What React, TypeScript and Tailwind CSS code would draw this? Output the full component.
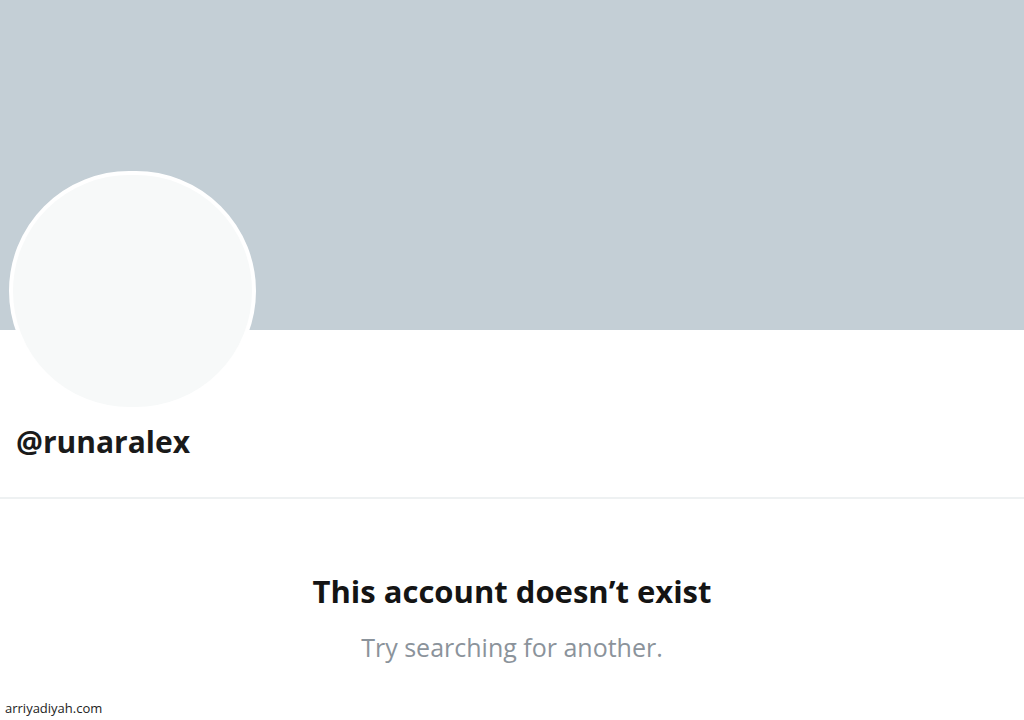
export default function App() {
  return (
    <div className="relative h-[720px] w-[1024px] overflow-hidden bg-white font-['Open_Sans',Arial,sans-serif]">
      <div className="h-[330px] bg-[#c4cfd6]" />
      <div className="px-[9px]">
        <div className="-mt-[159px] h-[240px] w-[247px] rounded-full border-[4px] border-white bg-[#f7f9f9]" />
        <div className="mt-[12px] pl-[7px] text-[30px] font-bold leading-[38px] text-[#1a1a1a]">@runaralex</div>
      </div>
      <div className="mt-[36px] h-[2px] bg-[#eef1f2]" />
      <div className="flex flex-col items-center pt-[72px]">
        <h1 className="text-[31px] font-bold leading-[40px] text-[#141414]">This account doesn’t exist</h1>
        <p className="mt-[19px] text-[25px] leading-[34px] text-[#8b939b]">Try searching for another.</p>
      </div>
      <div className="absolute bottom-[2px] left-[5px] text-[13px] text-[#222]">arriyadiyah.com</div>
    </div>
  )
}
